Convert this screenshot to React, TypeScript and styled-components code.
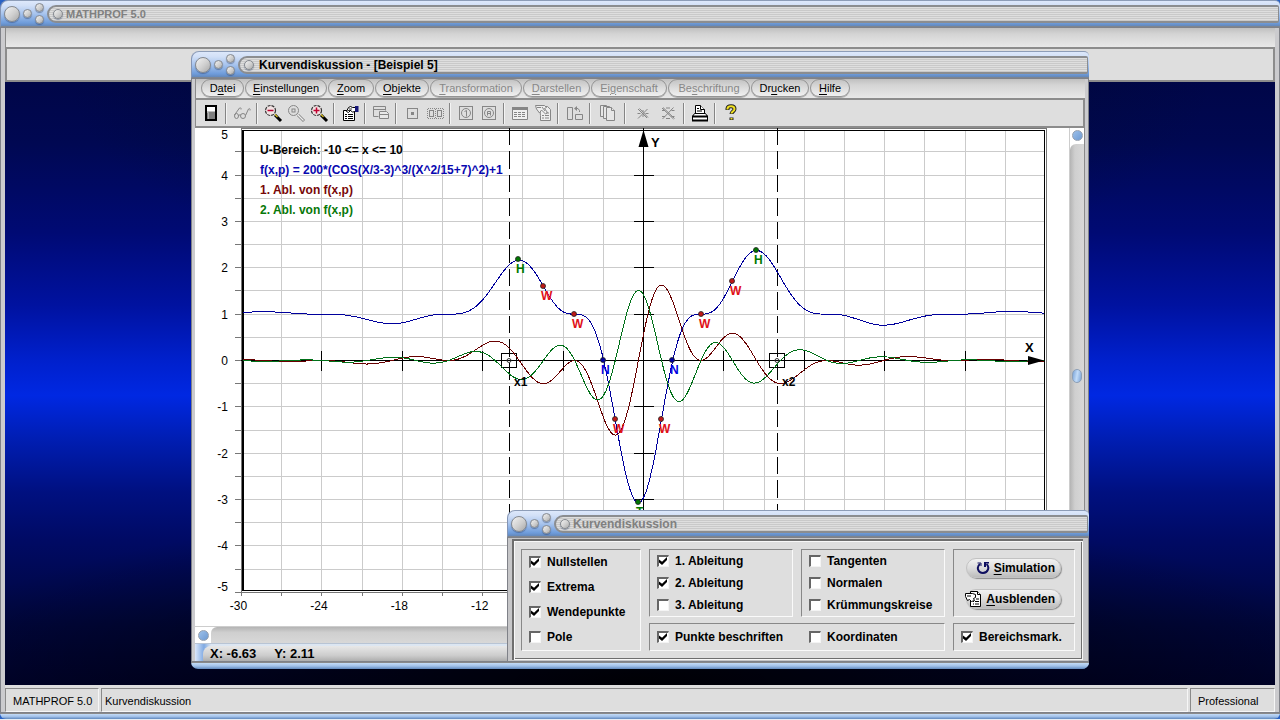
import React from "react";
import styled, { createGlobalStyle, css } from "styled-components";

const GlobalStyle = createGlobalStyle`
  * { box-sizing: border-box; }
  body {
    margin: 0;
    font-family: "Liberation Sans", Arial, sans-serif;
    font-size: 12px;
    color: #000;
    background: #2a62c4;
  }
  button { font: inherit; color: inherit; margin: 0; padding: 0; }
  u { text-underline-offset: 2px; }
`;

/* ---------- frames ---------- */

const Shell = styled.div`
  position: relative;
  height: 100vh;
  min-height: 700px;
  display: flex;
  flex-direction: column;
  overflow: hidden;
  border-bottom: 1px solid #e4ecf4;
`;

const FrameBody = styled.div<{ $edge: number }>`
  flex: 1;
  min-height: 0;
  display: flex;
  flex-direction: column;
  border: 0 solid #cbcbce;
  border-width: 0 ${(p) => p.$edge}px;
  outline: 1px solid #7f8188;
  outline-offset: -1px;
`;

const FrameFoot = styled.div<{ $height?: number }>`
  height: ${(p) => p.$height ?? 7}px;
  flex: none;
  border-top: 1px solid #8a8a8a;
  border-radius: 0 0 7px 7px;
  background: linear-gradient(#c4dbf6, #a3c2ea 50%, #6088bd);
`;

const Bar = styled.header`
  flex: none;
  height: 27px;
  display: flex;
  align-items: center;
  gap: 3px;
  padding: 0 1px 0 3px;
  border-top: 1px solid #8d9db8;
  border-left: 1px solid #8495b5;
  border-bottom: 1px solid #7d8590;
  border-radius: 8px 5px 0 0;
  background: linear-gradient(#dde8fb, #d2e0f7 18%, #a9c5ee 50%, #6d9bda 88%, #6488ba);
`;

const Knob = styled.button<{ $size: number }>`
  flex: none;
  width: ${(p) => p.$size}px;
  height: ${(p) => p.$size}px;
  border: 1px solid #85898f;
  border-radius: 50%;
  background: linear-gradient(135deg, #f2f2f2, #cfcfcf 55%, #a8a8a8);
  box-shadow: 0 1px 1px rgba(50, 70, 110, 0.5);
`;

const KnobPair = styled.div`
  display: flex;
  flex-direction: column;
  gap: 3px;
`;

const Groove = styled.div<{ $active?: boolean; $small?: boolean }>`
  flex: 1;
  height: 18px;
  display: flex;
  align-items: center;
  gap: ${(p) => (p.$active ? 5 : 3)}px;
  padding-left: 4px;
  border: 2px solid #8b8d90;
  border-right-width: 1px;
  border-radius: 9px 2px 2px 9px;
  background: repeating-linear-gradient(#dedede 0 1px, #c9c9c9 1px 2px);
  font-size: ${(p) => (p.$small ? 11 : 12)}px;
  font-weight: bold;
  line-height: 14px;
  white-space: nowrap;
  color: ${(p) => (p.$active ? "#000" : "#808080")};
`;

const TitleBar = ({ title, active, small }: { title: string; active?: boolean; small?: boolean }) => (
  <Bar>
    <Knob $size={16} aria-label="Schließen" />
    <Knob $size={9} aria-label="Minimieren" />
    <KnobPair>
      <Knob $size={9} aria-label="Maximieren" />
      <Knob $size={9} aria-label="Wiederherstellen" />
    </KnobPair>
    <Groove $active={active} $small={small}>
      <Knob $size={10} aria-label="Systemmenü" />
      {title}
    </Groove>
  </Bar>
);

/* ---------- main window ---------- */

const MenuStrip = styled.nav`
  flex: none;
  height: 22px;
  display: flex;
  align-items: center;
  padding-left: 5px;
  border-left: 1px solid #8a8a8a;
  border-bottom: 2px solid #8c8c8c;
  background: linear-gradient(#bcbcbc, #d4d4d4 35%, #e8e8e8);
`;

const EmptyToolbar = styled.div`
  flex: none;
  height: 33px;
  border: 2px solid #8c8c8c;
  border-width: 0 2px 2px 2px;
  background: #dedede;
`;

const Desktop = styled.main`
  flex: 1;
  background: radial-gradient(ellipse 60% 30% at 50% 100%, rgba(0, 0, 0, 0.9), rgba(0, 0, 20, 0)),
    radial-gradient(ellipse 45% 35% at 50% 0%, rgba(0, 12, 36, 0.7), rgba(0, 10, 40, 0)),
    linear-gradient(
      #000648 0%,
      #000852 10%,
      #000a74 25%,
      #0012a0 37%,
      #0020cc 46%,
      #0028e2 52%,
      #001eb4 59%,
      #001080 68%,
      #000a64 76%,
      #00063c 90%,
      #00022c 100%
    );
`;

const StatusBar = styled.footer`
  flex: none;
  height: 28px;
  display: flex;
  gap: 2px;
  padding: 3px 0 1px;
  background: #dedede;
`;

const StatusCell = styled.div<{ $width?: number }>`
  ${(p) => (p.$width ? `width: ${p.$width}px; flex: none;` : "flex: 1;")}
  padding-left: ${(p) => (p.$width ? 7 : 3)}px;
  border: 1px solid #8a8a8a;
  border-right-color: #f6f6f6;
  border-bottom-color: #f6f6f6;
  font-size: 11px;
  line-height: 24px;
  white-space: nowrap;
`;

/* ---------- child windows ---------- */

const PlotWindow = styled.section`
  position: absolute;
  top: 51px;
  right: 191px;
  bottom: 50px;
  left: 191px;
  display: flex;
  flex-direction: column;
`;

const MenuItem = styled.button<{ $width: number }>`
  width: ${(p) => p.$width}px;
  height: 18px;
  margin-right: 1px;
  border: 1px solid #949494;
  border-radius: 9px;
  background: linear-gradient(#c4c4c4, #dcdcdc 50%, #f0f0f0);
  box-shadow: 0 1px 0 #b0b0b0;
  font-size: 11px;
  line-height: 15px;
  white-space: nowrap;
  &:disabled { color: #888; }
`;

const Toolbar = styled.div`
  flex: none;
  height: 28px;
  display: flex;
  align-items: center;
  padding-left: 3px;
  border-left: 1px solid #8c8c8c;
  border-right: 2px solid #8c8c8c;
  border-bottom: 2px solid #8c8c8c;
  background: #dedede;
`;

const ToolButton = styled.button<{ $wide?: boolean }>`
  width: ${(p) => (p.$wide ? 25 : 23)}px;
  height: 22px;
  display: grid;
  place-items: center;
  border: 0;
  background: none;
`;

const Separator = styled.span<{ $wide?: boolean }>`
  width: 2px;
  height: 21px;
  margin: 0 ${(p) => (p.$wide ? 4 : 3)}px;
  border-left: 1px solid #858585;
  border-right: 1px solid #f4f4f4;
`;

const Canvas = styled.div`
  flex: 1;
  min-height: 0;
  display: flex;
  overflow: hidden;
  background: #fff;
`;

const PlotArea = styled.div`
  flex: 1;
  min-width: 0;
  overflow: hidden;
`;

const ScrollRail = styled.div<{ $vertical?: boolean }>`
  flex: none;
  display: flex;
  align-items: center;
  background: #fff;
  ${(p) =>
    p.$vertical
      ? "width: 16px; flex-direction: column; padding-top: 2px; gap: 3px; border-left: 1px solid #cdcdcd; border-right: 1px solid #8a8a8a;"
      : "height: 17px; padding-left: 3px; gap: 2px; border-top: 1px solid #cdcdcd;"}
`;

const Ball = styled.button`
  flex: none;
  width: 11px;
  height: 11px;
  border: 1px solid #96a0ae;
  border-radius: 50%;
  background: linear-gradient(135deg, #9cc0ea, #6e9ad2);
`;

const Track = styled.div<{ $vertical?: boolean }>`
  flex: 1;
  align-self: stretch;
  display: flex;
  flex-direction: column;
  align-items: center;
  ${(p) =>
    p.$vertical
      ? "border-radius: 6px 0 0 0; padding-top: 225px; background: linear-gradient(90deg, #b4b4b4, #cfcfcf 35%, #d8d8d8);"
      : "border-radius: 6px 0 0 0; background: linear-gradient(#b4b4b4, #cfcfcf 35%, #d8d8d8);"}
`;

const Thumb = styled.span`
  width: 10px;
  height: 14px;
  border: 1px solid #8ca0b8;
  border-radius: 5px;
  background: linear-gradient(100deg, #7aa3d8, #c2dcf8 50%, #7aa3d8);
`;

const Readout = styled.footer`
  flex: none;
  height: 19px;
  padding: 2px 0 0 8px;
  border-top: 1px solid #b8c4d4;
  background: linear-gradient(90deg, #dbe7fa, #7fa9e2 9px, #dce6f2 16px);
`;

const ReadoutPill = styled.div`
  height: 16px;
  display: flex;
  gap: 18px;
  padding-left: 7px;
  border-radius: 8px 0 0 2px;
  background: linear-gradient(#e8e8e8, #cccccc 60%, #a8a8a8);
  font-size: 13px;
  font-weight: bold;
  line-height: 16px;
`;

/* ---------- options dialog ---------- */

const Dialog = styled.section`
  position: absolute;
  right: 191px;
  bottom: 50px;
  left: 507px;
  display: flex;
  flex-direction: column;
`;

const dialogEdge = css`
  border: solid #c6c6c8;
  border-width: 2px 6px 2px 5px;
  outline: 1px solid #7f8188;
  outline-offset: -1px;
`;

const DialogBody = styled.form`
  ${dialogEdge}
  display: grid;
  grid-template-columns: 120px 144px 144px 122px;
  grid-template-rows: 68px 28px;
  gap: 6px 8px;
  padding: 10px 8px 9px 9px;
  background: #dedede;
  box-shadow: inset 2px 2px 0 #6e6e6e, inset 3px 3px 0 #f8f8f8, inset -1px -1px 0 #f8f8f8,
    inset -2px -2px 0 #6e6e6e;
`;

const Group = styled.fieldset<{ $area: string }>`
  grid-area: ${(p) => p.$area};
  min-width: 0;
  margin: 0;
  padding: 0 0 0 7px;
  border: 1px solid #888;
  border-right-color: #fafafa;
  border-bottom-color: #fafafa;
`;

const Option = styled.label<{ $height: number }>`
  height: ${(p) => p.$height}px;
  display: flex;
  align-items: center;
  gap: 6px;
  font-weight: bold;
  white-space: nowrap;
`;

const OptionRow = styled.div`
  display: grid;
  grid-template-columns: 144px 1fr;
  gap: 8px;
`;

const Tick = styled.input`
  appearance: none;
  flex: none;
  width: 12px;
  height: 12px;
  margin: 0;
  border: 1px solid #f4f4f4;
  border-top: 2px solid #666;
  border-left: 2px solid #666;
  background: #fff;
  &:checked::before {
    content: "";
    display: block;
    width: 8px;
    height: 8px;
    background: #000;
    clip-path: polygon(0 30%, 38% 60%, 100% 0, 100% 38%, 38% 100%, 0 68%);
  }
`;

const Actions = styled.div`
  display: flex;
  flex-direction: column;
  gap: 11px;
  padding: 8px 13px 0 5px;
`;

const ActionButton = styled.button`
  height: 20px;
  display: flex;
  align-items: center;
  justify-content: flex-end;
  gap: 4px;
  padding-right: 5px;
  border: 1px solid #c2c2c2;
  border-radius: 10px;
  background: linear-gradient(#f2f2f2, #dadada 55%, #bcbcbc);
  box-shadow: 1px 1px 1px #8d8d8d;
  font-weight: bold;
  svg { flex: none; }
`;

/* ---------- icons ---------- */

const G = "#868686";
type IconName =
  | "exit" | "glasses" | "zoomOut" | "zoomReset" | "zoomIn" | "props" | "window"
  | "dot" | "pair" | "one" | "two" | "table" | "sheet" | "rotate" | "copy"
  | "cross" | "crossBig" | "print" | "help";

const icons: Record<IconName, React.ReactNode> = {
  exit: (
    <>
      <path d="M4 2h12v16H4z" fill="#000" />
      <path d="M6 4h8v12H6z" fill="#808080" />
      <path d="M6 4h8v4.500H6z" fill="#fff" />
      <path d="M6 9.500h1.500v6.500" stroke="#b0b0b0" fill="none" />
    </>
  ),
  glasses: (
    <g fill="none" stroke={G}>
      <ellipse cx="4.500" cy="13" rx="2" ry="2.500" /><ellipse cx="11" cy="13" rx="2.500" ry="2.500" />
      <path d="M2.500 12 7.500 5c1-.5 2 0 1.500 1.500M13.500 12.500l3-6.500c1-1 2 0 1.500 1.500M6.500 12.500l2-1" />
    </g>
  ),
  zoomOut: (
    <>
      <path d="m12 12 6 6" stroke="#000" strokeWidth="3" />
      <path d="m12 11.500 2.500 2.500" stroke="#d8c020" strokeWidth="1.200" />
      <circle cx="7.500" cy="7.500" r="5" fill="#f0e2e2" stroke="#333" strokeWidth="1.200" strokeDasharray="3 1" />
      <path d="M4.500 7.500h6" stroke="#c00030" strokeWidth="1.500" />
    </>
  ),
  zoomReset: (
    <>
      <path d="m12 12 6 6" stroke={G} strokeWidth="3" />
      <path d="m12 12 5.500 5.500" stroke="#eee" strokeWidth="1.200" />
      <circle cx="7.500" cy="7.500" r="5" fill="none" stroke={G} />
      <rect x="6" y="6" width="3" height="3" fill="none" stroke={G} />
    </>
  ),
  zoomIn: (
    <>
      <path d="m12 12 6 6" stroke="#000" strokeWidth="3" />
      <path d="m12 11.500 2.500 2.500" stroke="#d8c020" strokeWidth="1.200" />
      <circle cx="7.500" cy="7.500" r="5" fill="#f0e2e2" stroke="#333" strokeWidth="1.200" strokeDasharray="3 1" />
      <path d="M4.500 7.500h6M7.500 4.500v6" stroke="#c00030" strokeWidth="1.500" />
    </>
  ),
  props: (
    <>
      <path d="M3.500 7.500h11v10h-11z" fill="#fff" stroke="#000" />
      <path d="M5 11.500h2M8 11.500h5M5 13.500h2M8 13.500h5M5 15.500h2M8 15.500h5" stroke="#000" />
      <path d="m6.500 8.500 2-4 2-1 2 1h3v4l-3 .5-2-1.500-2 2z" fill="#fff" stroke="#000" />
      <path d="M8 7.500h3M9 6h3" stroke="#000" strokeWidth=".8" />
      <path d="M15 3h3.500v6H15z" fill="#181878" />
    </>
  ),
  window: (
    <g fill="none" stroke={G}>
      <path d="M14.500 7.500v-4h-12v10h5M2.500 6.500h12" />
      <path d="M8.500 8.500h7l2 2v5h-9zM8.500 11.500h9" fill="#e8e8e8" />
    </g>
  ),
  dot: (
    <g fill="none" stroke={G}>
      <rect x="5.500" y="5.500" width="10" height="10" />
      <rect x="9" y="9" width="3" height="3" fill={G} stroke="none" />
    </g>
  ),
  pair: (
    <g fill="none" stroke={G}>
      <path d="M3 5.500h15M3 15.500h15" strokeDasharray="1 1" />
      <rect x="4.500" y="7.500" width="4" height="6" /><rect x="12.500" y="7.500" width="4" height="6" />
      <path d="M2.500 6v9M18.500 6v9M10.500 6v9" strokeDasharray="1 1" />
    </g>
  ),
  one: (
    <g fill="none" stroke={G}>
      <rect x="3.500" y="3.500" width="13" height="13" /><circle cx="10" cy="10" r="4.500" />
      <path d="M8.500 8.500 10.500 7.500v6" />
    </g>
  ),
  two: (
    <g fill="none" stroke={G}>
      <rect x="3.500" y="3.500" width="13" height="13" /><circle cx="10" cy="10" r="4.500" />
      <path d="M8.500 12.500v-4h3v4M8.500 10.500h3" />
    </g>
  ),
  table: (
    <g fill="none" stroke={G}>
      <path d="M2.500 4.500h15v12h-15z" fill="#f0f0f0" /><path d="M2 5.500h16" strokeWidth="3" />
      <path d="M4 9.500h12M4 11.500h12M4 13.500h12" strokeDasharray="3 1" />
    </g>
  ),
  sheet: (
    <g fill="#eee" stroke={G}>
      <path d="M6.500 3.500h8l3 3v11h-10v-5z" />
      <path d="M2.500 2.500h9l2 2-2 1 3 4-2 1.500-4-4-2 3-3-4z" />
      <path d="M4 4.500h4M9 4l3 4M9 12.500h2M12 12.500h4M9 15h2M12 15h4M13 10h3" />
    </g>
  ),
  rotate: (
    <g fill="none" stroke={G}>
      <path d="M3.500 4.500h5v12h-5zM11.500 11.500h7v5h-7zM15.500 9v-1.500l-1.500-2h-2" />
      <path d="m10 5.500 3-2.500v5z" fill={G} stroke="none" />
    </g>
  ),
  copy: (
    <g fill="#e6e6e6" stroke={G}>
      <path d="M2.500 2.500h6v11h-6z" /><path d="M5.500 3.500h6v12h-6z" />
      <path d="M8.500 4.500h5l3 3v10h-8z" /><path d="M13.500 4.500v3h3" />
    </g>
  ),
  cross: (
    <g stroke={G} fill="none">
      <path d="m5 6 9 9M6.500 5.500l8.500 9M14.500 6l-9.500 9.500M4.500 10.500h3M12.500 10.500h3M9 8h2M9 13h2" />
    </g>
  ),
  crossBig: (
    <g stroke={G} fill="none">
      <path d="m4 5 11.500 11M5 4.500l11.500 11M15.500 4.500 4.500 16M4 7.500h3M13.500 7.500h3M4 13.500h3M13.500 13.500h3M8 5h4M8 15.500h4" />
    </g>
  ),
  print: (
    <g fill="#fff" stroke="#000">
      <path d="M5.500 10.500v-8h5l4 4v4z" /><path d="M10.500 2.500v4h4" />
      <path d="M7 5.500h2M7 8h5" />
      <path d="M2.500 13.500l2-3h11l2 3v4h-15z" />
      <path d="M2 13.500h16M2 17.500h16" strokeWidth="2" />
    </g>
  ),
  help: (
    <g fill="none">
      <path d="M6.500 7V5.500C7 2.500 13.500 2.500 13.500 6c0 2.500-3 2.500-3 5M10.500 14.500v2.500" stroke="#222" strokeWidth="4" />
      <path d="M6.500 6.500v-1C7 2.500 13.500 2.500 13.500 6c0 2.500-3 2.500-3 4.500M10.500 15v1.500" stroke="#f0e020" strokeWidth="2" />
    </g>
  ),
};

const Icon = ({ name }: { name: IconName }) => (
  <svg width="20" height="20" viewBox="0 0 20 20" aria-hidden="true">{icons[name]}</svg>
);

/* ---------- plot ---------- */

const OX = 448.5;
const OY = 232.5;
const px = (x: number) => OX + x * 13.4;
const py = (y: number) => OY - y * 46.35;
const snap = (v: number) => Math.floor(v) + 0.5;

const f = (x: number) => (200 * Math.cos(x / 3 - 3) ** 3) / (x * x / 15 + 7) ** 2 + 1;
const h = 0.001;
const f1 = (x: number) => (f(x + h) - f(x - h)) / (2 * h);
const f2 = (x: number) => (f(x + h) - 2 * f(x) + f(x - h)) / (h * h);

const curve = (fn: (x: number) => number) => {
  const pts: string[] = [];
  for (let i = -299; i <= 299; i += 1) {
    const x = i / 10;
    pts.push(`${px(x).toFixed(1)},${py(fn(x)).toFixed(1)}`);
  }
  return pts.join(" ");
};

const range = (from: number, to: number, step: number) =>
  Array.from({ length: Math.round((to - from) / step) + 1 }, (_, i) => from + i * step);

const GREEN = "#007800";
const RED = "#e01018";
const BLUE = "#0000e0";
const points = [
  { x: 323, y: 131, label: "H", dot: GREEN, ink: GREEN },
  { x: 561, y: 122, label: "H", dot: GREEN, ink: GREEN },
  { x: 348, y: 158, label: "W", dot: "#c01818", ink: RED },
  { x: 379, y: 186, label: "W", dot: "#c01818", ink: RED },
  { x: 420, y: 291, label: "W", dot: "#c01818", ink: RED },
  { x: 466, y: 291, label: "W", dot: "#c01818", ink: RED },
  { x: 506, y: 186, label: "W", dot: "#c01818", ink: RED },
  { x: 537, y: 153, label: "W", dot: "#c01818", ink: RED },
  { x: 408, y: 232, label: "N", dot: "#0000a0", ink: BLUE },
  { x: 477, y: 232, label: "N", dot: "#0000a0", ink: BLUE },
  { x: 443, y: 374, label: "T", dot: GREEN, ink: GREEN },
];

const legend = [
  { text: "U-Bereich: -10 <= x <= 10", color: "#000" },
  { text: "f(x,p) = 200*(COS(X/3-3)^3/(X^2/15+7)^2)+1", color: "#0808b0" },
  { text: "1. Abl. von f(x,p)", color: "#780808" },
  { text: "2. Abl. von f(x,p)", color: "#087808" },
];

const PlotSvg = styled.svg`
  display: block;
  font-size: 12px;
  .bold { font-weight: bold; }
`;

const Plot = () => (
  <PlotSvg width="874" height="498" viewBox="0 0 874 498" role="img" aria-label="Funktionsgraph">
    <g shapeRendering="crispEdges" fill="none">
      <g stroke="#cbcbcb">
        {range(-27, 27, 3).map((x) => <path key={x} d={`M${snap(px(x))} 3V462`} />)}
        {range(-4.5, 4.5, 0.5).map((y) => <path key={y} d={`M48 ${snap(py(y))}H849`} />)}
      </g>
      <g stroke="#777">
        <path d="M46.500 0V464.500H851.500V0M46 .5H852" />
        {range(-5, 4.5, 0.5).map((y) => <path key={y} d={`M40 ${snap(py(y))}H46`} />)}
        {range(-30, 30, 3).map((x) => <path key={x} d={`M${snap(px(x))} 465V468`} />)}
      </g>
      <path d="M48 2.500H849.500V462.500H48z" stroke="#000" />
      <path d="M47 2h1v461h-1z" fill="#000" />
      <g stroke="#000">
        <path d={`M46 ${OY}H849M${OX} 0V462`} />
        {range(-24, 24, 6).map((x) => <path key={x} d={`M${snap(px(x))} 223V243`} />)}
        {range(-4, 4, 1).map((y) => <path key={y} d={`M439 ${snap(py(y))}H459`} />)}
        {[-10, 10].map((x) => (
          <path key={x} d={`M${snap(px(x))} 0V462`} strokeDasharray="17 6 18 6" />
        ))}
        <path d="M306.500 225.500h15v14h-15zM574.500 225.500h15v14h-15z" />
      </g>
      <polyline points={curve(f)} stroke="#00009c" />
      <polyline points={curve(f1)} stroke="#680000" />
      <polyline points={curve(f2)} stroke="#007018" />
    </g>
    <path d="M448.500 2 443.500 19h10zM849 232.500 833 228v9z" />
    <g fill="none" stroke="#333">
      <circle cx="314" cy="232.500" r="2" /><circle cx="582" cy="232.500" r="2" />
    </g>
    <g className="bold">
      {points.map((p) => (
        <g key={`${p.x}-${p.label}`}>
          <circle cx={p.x} cy={p.y} r="2.500" fill={p.dot} stroke="#222" strokeWidth="0.800" />
          <text x={p.x - 2} y={p.y + 14} fill={p.ink}>{p.label}</text>
        </g>
      ))}
      <text x="319" y="258">x1</text>
      <text x="587" y="258">x2</text>
      <text x="456" y="19" fontSize="13">Y</text>
      <text x="830" y="224" fontSize="13">X</text>
      {legend.map((l, i) => (
        <text key={l.text} x="65" y={26 + i * 20} fill={l.color}>{l.text}</text>
      ))}
    </g>
    <g textAnchor="end">
      {range(-5, 5, 1).map((y) => (
        <text key={y} x="33" y={y === 5 ? 11 : y === -5 ? 463 : snap(py(y)) + 4}>{y}</text>
      ))}
    </g>
    <g textAnchor="middle">
      {range(-30, -12, 6).map((x) => <text key={x} x={px(x) - 3} y="482">{x}</text>)}
    </g>
  </PlotSvg>
);

/* ---------- content ---------- */

const menu = [
  { pre: "D", key: "a", post: "tei", width: 43 },
  { pre: "", key: "E", post: "instellungen", width: 82 },
  { pre: "", key: "Z", post: "oom", width: 46 },
  { pre: "", key: "O", post: "bjekte", width: 54 },
  { pre: "", key: "T", post: "ransformation", width: 92, off: true },
  { pre: "", key: "D", post: "arstellen", width: 67, off: true },
  { pre: "Ei", key: "g", post: "enschaft", width: 76, off: true },
  { pre: "Be", key: "s", post: "chriftung", width: 82, off: true },
  { pre: "Dr", key: "u", post: "cken", width: 58 },
  { pre: "", key: "H", post: "ilfe", width: 40 },
];

const tools: { wide?: boolean; items: { id: IconName; label: string }[] }[] = [
  { items: [{ id: "exit", label: "Beenden" }] },
  { items: [{ id: "glasses", label: "Ansicht" }] },
  {
    items: [
      { id: "zoomOut", label: "Verkleinern" },
      { id: "zoomReset", label: "Originalgröße" },
      { id: "zoomIn", label: "Vergrößern" },
    ],
  },
  { items: [{ id: "props", label: "Einstellungen" }] },
  { items: [{ id: "window", label: "Fenster" }] },
  { items: [{ id: "dot", label: "Punkt" }, { id: "pair", label: "Punktpaar" }] },
  { items: [{ id: "one", label: "Objekt 1" }, { id: "two", label: "Objekt 2" }] },
  { items: [{ id: "table", label: "Wertetabelle" }, { id: "sheet", label: "Formular" }] },
  { items: [{ id: "rotate", label: "Drehen" }] },
  { wide: true, items: [{ id: "copy", label: "Kopieren" }] },
  { wide: true, items: [{ id: "cross", label: "Löschen" }, { id: "crossBig", label: "Alles löschen" }] },
  { items: [{ id: "print", label: "Drucken" }] },
  { items: [{ id: "help", label: "Hilfe" }] },
];

const Check = ({ label, on, height }: { label: string; on?: boolean; height: number }) => (
  <Option $height={height}>
    <Tick type="checkbox" defaultChecked={on} />
    {label}
  </Option>
);

const OptionsDialog = () => (
  <Dialog aria-label="Kurvendiskussion">
    <TitleBar title="Kurvendiskussion" />
    <DialogBody onSubmit={(e) => e.preventDefault()}>
      <Group $area="1 / 1 / 3 / 2">
        <Check label="Nullstellen" on height={24} />
        <Check label="Extrema" on height={26} />
        <Check label="Wendepunkte" on height={24} />
        <Check label="Pole" height={26} />
      </Group>
      <Group $area="1 / 2">
        <Check label="1. Ableitung" on height={22} />
        <Check label="2. Ableitung" on height={22} />
        <Check label="3. Ableitung" height={22} />
      </Group>
      <Group $area="1 / 3">
        <Check label="Tangenten" height={22} />
        <Check label="Normalen" height={22} />
        <Check label="Krümmungskreise" height={22} />
      </Group>
      <Group $area="1 / 4">
        <Actions>
          <ActionButton type="button">
            <svg width="14" height="14" viewBox="0 0 14 14" aria-hidden="true">
              <path d="M4 3C0 6 2 12 7 12s7-6 3.500-9" fill="none" stroke="#101060" strokeWidth="2" />
              <path d="M8 1h5v1.500H10V6H8z" fill="#101060" />
              <path d="M1.500 2H5v3" fill="none" stroke="#101060" />
            </svg>
            <span><u>S</u>imulation</span>
          </ActionButton>
          <ActionButton type="button">
            <svg width="17" height="18" viewBox="0 0 17 18" aria-hidden="true">
              <g fill="#fff" stroke="#000">
                <path d="M5.500 1.500h7l3 3v12h-10z" />
                <path d="M.5 3.500h7l3 1v3l-2 1 1 2-3 1-2-2-2 1-2-4z" />
                <path d="M8 11.500h1M10 11.500h4M8 14h1M10 14h4M11 9h3M12.500 1.500v3h3M2 6h4" />
              </g>
            </svg>
            <span><u>A</u>usblenden</span>
          </ActionButton>
        </Actions>
      </Group>
      <Group $area="2 / 2 / 3 / 4">
        <OptionRow>
          <Check label="Punkte beschriften" on height={26} />
          <Check label="Koordinaten" height={26} />
        </OptionRow>
      </Group>
      <Group $area="2 / 4">
        <Check label="Bereichsmark." on height={26} />
      </Group>
    </DialogBody>
    <FrameFoot />
  </Dialog>
);

export default function App() {
  return (
    <Shell>
      <GlobalStyle />
      <TitleBar title="MATHPROF 5.0" small />
      <FrameBody $edge={5}>
        <MenuStrip />
        <EmptyToolbar />
        <Desktop />
        <StatusBar>
          <StatusCell $width={94}>MATHPROF 5.0</StatusCell>
          <StatusCell>Kurvendiskussion</StatusCell>
          <StatusCell $width={85}>Professional</StatusCell>
        </StatusBar>
      </FrameBody>
      <FrameFoot $height={6} />

      <PlotWindow aria-label="Kurvendiskussion - [Beispiel 5]">
        <TitleBar title="Kurvendiskussion - [Beispiel 5]" active />
        <FrameBody $edge={4}>
          <MenuStrip>
            {menu.map((m) => (
              <MenuItem key={m.pre + m.key + m.post} $width={m.width} disabled={m.off}>
                {m.pre}<u>{m.key}</u>{m.post}
              </MenuItem>
            ))}
          </MenuStrip>
          <Toolbar>
            {tools.map((group, i) => (
              <React.Fragment key={group.items[0].id}>
                {i > 0 && <Separator $wide={group.wide} />}
                {group.items.map((t) => (
                  <ToolButton key={t.id} aria-label={t.label} $wide={group.wide}>
                    <Icon name={t.id} />
                  </ToolButton>
                ))}
              </React.Fragment>
            ))}
          </Toolbar>
          <Canvas>
            <PlotArea><Plot /></PlotArea>
            <ScrollRail $vertical>
              <Ball aria-label="Nach oben" />
              <Track $vertical><Thumb /></Track>
            </ScrollRail>
          </Canvas>
          <ScrollRail>
            <Ball aria-label="Nach links" />
            <Track />
          </ScrollRail>
          <Readout>
            <ReadoutPill>
              <span>X: -6.63</span>
              <span>Y: 2.11</span>
            </ReadoutPill>
          </Readout>
        </FrameBody>
        <FrameFoot />
      </PlotWindow>

      <OptionsDialog />
    </Shell>
  );
}
